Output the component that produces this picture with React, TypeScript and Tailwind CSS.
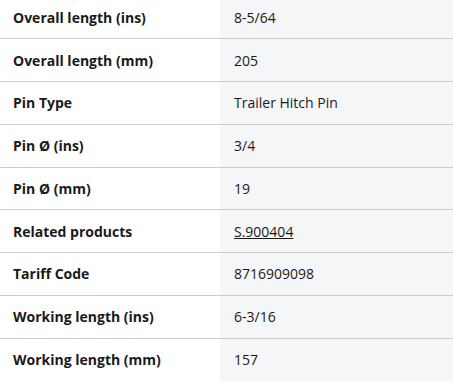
import React from 'react';

const rows: { label: string; value: string; link?: boolean }[] = [
  { label: 'Overall length (ins)', value: '8-5/64' },
  { label: 'Overall length (mm)', value: '205' },
  { label: 'Pin Type', value: 'Trailer Hitch Pin' },
  { label: 'Pin Ø (ins)', value: '3/4' },
  { label: 'Pin Ø (mm)', value: '19' },
  { label: 'Related products', value: 'S.900404', link: true },
  { label: 'Tariff Code', value: '8716909098' },
  { label: 'Working length (ins)', value: '6-3/16' },
  { label: 'Working length (mm)', value: '157' },
];

export default function App() {
  return (
    <div className="w-[453px] h-[381px] overflow-hidden bg-white font-['Open_Sans',sans-serif] text-[14px] text-[#1a1a1a]">
      <div className="-mt-[3.5px]">
        {rows.map((row, i) => (
          <div
            key={row.label}
            className={`flex h-[42.75px] ${i < rows.length - 1 ? 'border-b border-[#cccccc]' : ''}`}
          >
            <div className="w-[220px] flex items-center pl-[13px] font-bold">{row.label}</div>
            <div className="flex-1 flex items-center pl-[14px] bg-[#f5f6f8]">
              {row.link ? <a className="underline">{row.value}</a> : row.value}
            </div>
          </div>
        ))}
      </div>
    </div>
  );
}
